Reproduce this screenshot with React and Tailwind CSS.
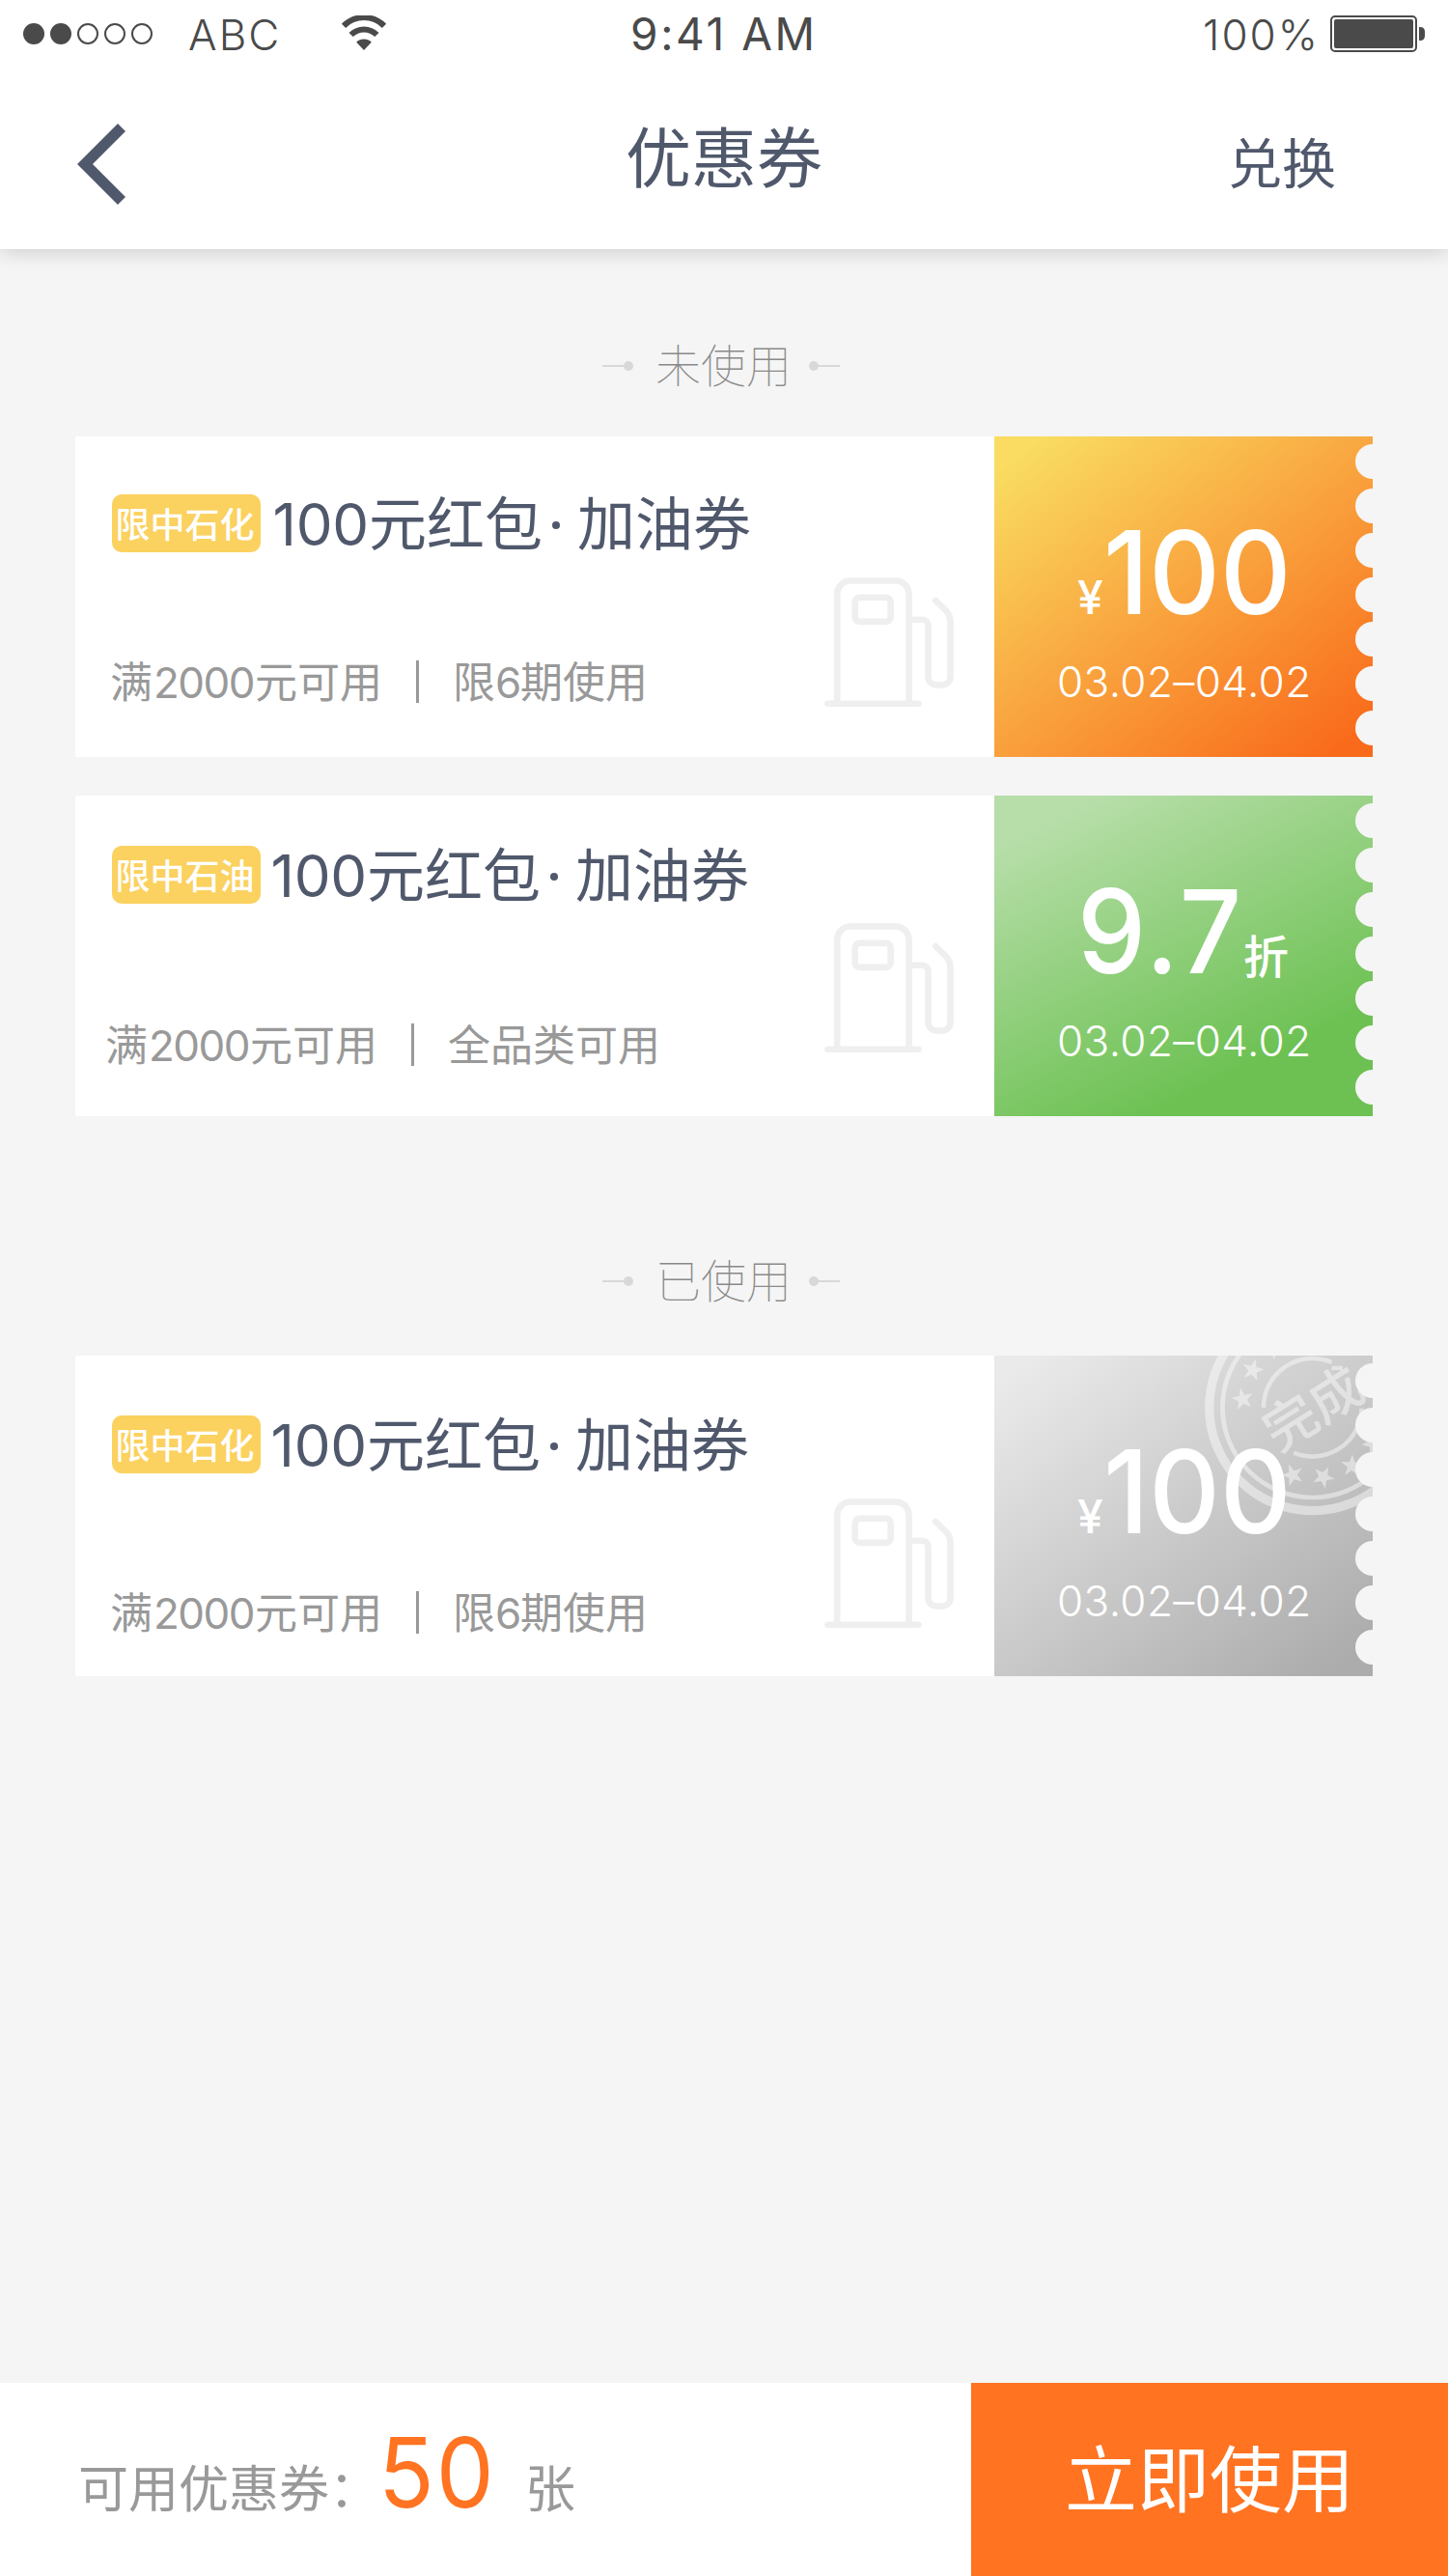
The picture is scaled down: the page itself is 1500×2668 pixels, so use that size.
const coupons = {
  unused: [
    {
      id: 1,
      tag: "限中石化",
      scope: ["限", "6", "期使用"],
      value: "100",
      prefix: "¥",
      rowTop: "mt-[60px]",
      subTop: "mt-[113px]",
      subLeft: "-ml-[2px]",
      titleLeft: "ml-[14px]",
      iconTop: "mt-[146px]",
      tone: "bg-[linear-gradient(143deg,#f9dc61_6%,#f96a1a_95%)]",
    },
    {
      id: 2,
      tag: "限中石油",
      scope: ["全品类可用"],
      value: "9.7",
      suffix: "折",
      rowTop: "mt-[52px]",
      subTop: "mt-[125px]",
      subLeft: "-ml-[7px]",
      titleLeft: "ml-[12px]",
      iconTop: "mt-[132px]",
      tone: "bg-[linear-gradient(154deg,#b7dea9_10%,#6cc152_79%)]",
    },
  ],
  used: [
    {
      id: 3,
      tag: "限中石化",
      scope: ["限", "6", "期使用"],
      value: "100",
      prefix: "¥",
      done: true,
      rowTop: "mt-[62px]",
      subTop: "mt-[123px]",
      subLeft: "-ml-[2px]",
      titleLeft: "ml-[12px]",
      iconTop: "mt-[148px]",
      tone: "bg-[linear-gradient(143deg,#eaeaea_5%,#acacac_94%)]",
    },
  ],
};

function StatusBar() {
  return (
    <div className="flex h-[70px] justify-between pl-[24px] pr-[24px] text-[#4a4a4a]">
      <div className="flex w-[560px]">
        <div className="mt-[24px] flex gap-[6px]">
          <i className="size-[22px] rounded-full bg-[#4a4a4a]" />
          <i className="size-[22px] rounded-full bg-[#4a4a4a]" />
          <i className="size-[22px] rounded-full border-2 border-[#4a4a4a]" />
          <i className="size-[22px] rounded-full border-2 border-[#4a4a4a]" />
          <i className="size-[22px] rounded-full border-2 border-[#4a4a4a]" />
        </div>
        <span className="ml-[37px] mt-[14px] w-[159px] text-[44px] font-light leading-[44px] tracking-[2px]">ABC</span>
        <svg className="mt-[16px] h-[36px] w-[46px]" viewBox="0 0 46 36" fill="none" stroke="#4a4a4a">
          <path d="M2 10.8a29.6 29.6 0 0 1 42 0" strokeWidth="6" />
          <path d="M9.6 20a18.8 18.8 0 0 1 26.800 0" strokeWidth="6" />
          <path d="M23 36 15.200 27.700a11 11 0 0 1 15.600 0Z" fill="#4a4a4a" stroke="none" />
        </svg>
      </div>
      <span className="mt-[12px] w-[220px] whitespace-nowrap pl-[13px] text-[46px] leading-[46px] tracking-[2.600px]">
        9:41 AM
      </span>
      <div className="flex w-[560px] justify-end">
        <span className="mt-[14px] text-[44px] font-light leading-[44px] tracking-[2px]">100%</span>
        <svg className="ml-[11px] mt-[16px] h-[38px] w-[98px]" viewBox="0 0 98 38" fill="none">
          <rect x="1" y="1" width="88" height="36" rx="4" stroke="#4a4a4a" strokeWidth="2" />
          <rect x="4" y="4" width="82" height="30" rx="2" fill="#4a4a4a" />
          <path d="M92 12h1q5 0 5 5v4q0 5-5 5h-1z" fill="#4a4a4a" />
        </svg>
      </div>
    </div>
  );
}

function Header() {
  return (
    <header className="h-[258px] bg-white shadow-[0_2px_20px_rgba(0,0,0,0.18)]">
      <StatusBar />
      <div className="flex justify-between pl-[80px] pr-[116px] text-[#50586c]">
        <div className="w-[280px]">
          <svg className="mt-[58px] h-[84px] w-[50px]" viewBox="0 0 50 84" fill="none">
            <path d="M46 4 8 42l38 38" stroke="#50586c" strokeWidth="11.300" />
          </svg>
        </div>
        <h1 className="mt-[54px] text-[68px] leading-[80px]">优惠券</h1>
        <button className="mt-[58px] w-[244px] text-right text-[56px] leading-[60px]">兑换</button>
      </div>
    </header>
  );
}

function Divider({ className, children }) {
  return (
    <div className={`flex h-[48px] items-center justify-center pr-[6px] ${className}`}>
      <i className="h-[2px] w-[24px] bg-[#d8d8d8]" />
      <i className="-ml-[2px] size-[10px] rounded-full bg-[#d8d8d8]" />
      <span className="ml-[23px] mr-[18px] text-[47px] font-thin leading-[48px] text-[#8a8a8a]">{children}</span>
      <i className="size-[10px] rounded-full bg-[#d8d8d8]" />
      <i className="-ml-[2px] h-[2px] w-[24px] bg-[#d8d8d8]" />
    </div>
  );
}

function PumpIcon({ className }) {
  return (
    <svg
      className={`h-[136px] w-[136px] shrink-0 ${className}`}
      viewBox="0 0 136 136"
      fill="none"
      stroke="#efefef"
      strokeWidth="6.600"
      strokeLinecap="round"
      strokeLinejoin="round"
    >
      <path d="M3.500 130.700h94M13.200 130V17.500a14 14 0 0 1 14-14h46.400a14 14 0 0 1 14 14V130" />
      <rect x="31.700" y="20.700" width="37" height="25.200" rx="5" />
      <path d="M90 43.700h11.500a6 6 0 0 1 6 6V103a8.500 8.500 0 0 0 8.500 8.500h6a8.500 8.500 0 0 0 8.500-8.500V46q0-6.500-4.500-11.500L115.200 24" />
    </svg>
  );
}

function Star({ angle }) {
  return (
    <polygon
      transform={`rotate(${angle}) translate(73 0) rotate(90)`}
      points="0,-12 2.800,-3.800 11.400,-3.700 4.500,1.500 7,9.700 0,4.800 -7,9.700 -4.500,1.500 -11.400,-3.700 -2.800,-3.800"
      fill="#fff"
      stroke="none"
    />
  );
}

function Stamp() {
  return (
    <svg className="absolute inset-0 h-[332px] w-[392px] opacity-45" viewBox="0 0 392 332" fill="none" stroke="#fff">
      <g transform="translate(329.700 53.700)">
        <circle r="107" strokeWidth="9.300" />
        <circle r="93.300" strokeWidth="4.700" />
        <path d="M-50.800 0A50.800 50.800 0 0 1 19.800-46.800M50.800 1A50.800 50.800 0 0 1-19.500 46.900" strokeWidth="4.500" />
        {[-173.2, -148, -122.8, 106.4, 81.2, 56, 31].map((a) => (
          <Star key={a} angle={a} />
        ))}
        <text
          transform="rotate(-32)"
          x="0"
          y="21"
          textAnchor="middle"
          fontSize="55"
          fontWeight="500"
          fill="#fff"
          stroke="none"
        >
          完成
        </text>
      </g>
    </svg>
  );
}

function Coupon({ c }) {
  return (
    <article className="flex h-[332px] w-[1344px] bg-white">
      <div className="flex w-[952px] justify-between pl-[38px] pr-[40px]">
        <div className="whitespace-nowrap">
          <div className={`flex h-[60px] ${c.rowTop}`}>
            <span className="w-[154px] rounded-[10px] bg-[#fbd15f] pr-[3px] pt-[2px] text-center text-[36px] font-medium leading-[60px] text-white">
              {c.tag}
            </span>
            <h2 className={`flex pt-[1px] text-[60px] leading-[60px] text-[#50586c] ${c.titleLeft}`}>
              <span className="flex w-[98px] justify-end tracking-[-0.200px]">100</span>
              <span>元红包</span>
              <i className="ml-[10px] mt-[27px] size-[8px] rounded-full bg-[#50586c]" />
              <span className="ml-[18px]">加油券</span>
            </h2>
          </div>
          <p className={`flex text-[44px] leading-[44px] text-[#999] ${c.subTop} ${c.subLeft}`}>
            <span>满</span>
            <span className="w-[106px] text-center tracking-[-1.500px]">2000</span>
            <span className="w-[167px]">元可用</span>
            <i className="-mt-[1px] h-[44px] w-[3px] bg-[#999]" />
            <span className="ml-[35px]">{c.scope[0]}</span>
            {c.scope.length > 1 && (
              <>
                <span className="w-[26px] text-center">{c.scope[1]}</span>
                <span>{c.scope[2]}</span>
              </>
            )}
          </p>
        </div>
        <PumpIcon className={c.iconTop} />
      </div>
      <div className={`relative w-[392px] overflow-hidden text-white ${c.tone}`}>
        {c.done && <Stamp />}
        <div className="relative mt-[81px] flex h-[120px] items-baseline pl-[86px] text-[120px] font-medium leading-[120px]">
          {c.prefix && (
            <>
              <span className="w-[27px] text-[48px] leading-none">{c.prefix}</span>
              <span className="origin-left scale-x-[0.95]">{c.value}</span>
            </>
          )}
          {c.suffix && (
            <>
              <span className="w-[172px] origin-left scale-x-[0.94] tracking-[3px]">{c.value}</span>
              <span className="text-[47px] leading-none">{c.suffix}</span>
            </>
          )}
        </div>
        <p className="relative mt-[31px] whitespace-nowrap pl-[65px] text-[44px] font-light leading-[44px] tracking-[0.400px]">
          03.02–04.02
        </p>
        <div className="absolute -right-[18px] top-[8px] flex flex-col gap-[10px]">
          {[0, 1, 2, 3, 4, 5, 6].map((n) => (
            <i key={n} className="size-[36px] rounded-full bg-[#f5f5f5]" />
          ))}
        </div>
      </div>
    </article>
  );
}

function Footer() {
  return (
    <footer className="flex h-[200px] bg-white">
      <div className="flex w-[1006px] items-baseline whitespace-nowrap pl-[81px] text-[52px] leading-[186px] text-[#999]">
        <span className="w-[311px]">可用优惠券：</span>
        <span className="w-[152px] origin-left scale-x-[0.95] text-[100px] tracking-[2px] text-[#ff7321]">50</span>
        <span>张</span>
      </div>
      <button className="flex-1 bg-[#ff7321] pt-[2px] text-center text-[75px] leading-[198px] text-white">
        立即使用
      </button>
    </footer>
  );
}

export default function App() {
  return (
    <div className="flex h-[2668px] w-[1500px] flex-col overflow-hidden bg-[#f5f5f5] font-['Inter','Noto_Sans_CJK_SC',sans-serif]">
      <Header />
      <main className="flex flex-1 flex-col items-center">
        <Divider className="mt-[97px]">未使用</Divider>
        <div className="mt-[49px] flex flex-col gap-[40px]">
          {coupons.unused.map((c) => (
            <Coupon key={c.id} c={c} />
          ))}
        </div>
        <Divider className="mt-[147px]">已使用</Divider>
        <div className="mt-[53px]">
          {coupons.used.map((c) => (
            <Coupon key={c.id} c={c} />
          ))}
        </div>
      </main>
      <Footer />
    </div>
  );
}
